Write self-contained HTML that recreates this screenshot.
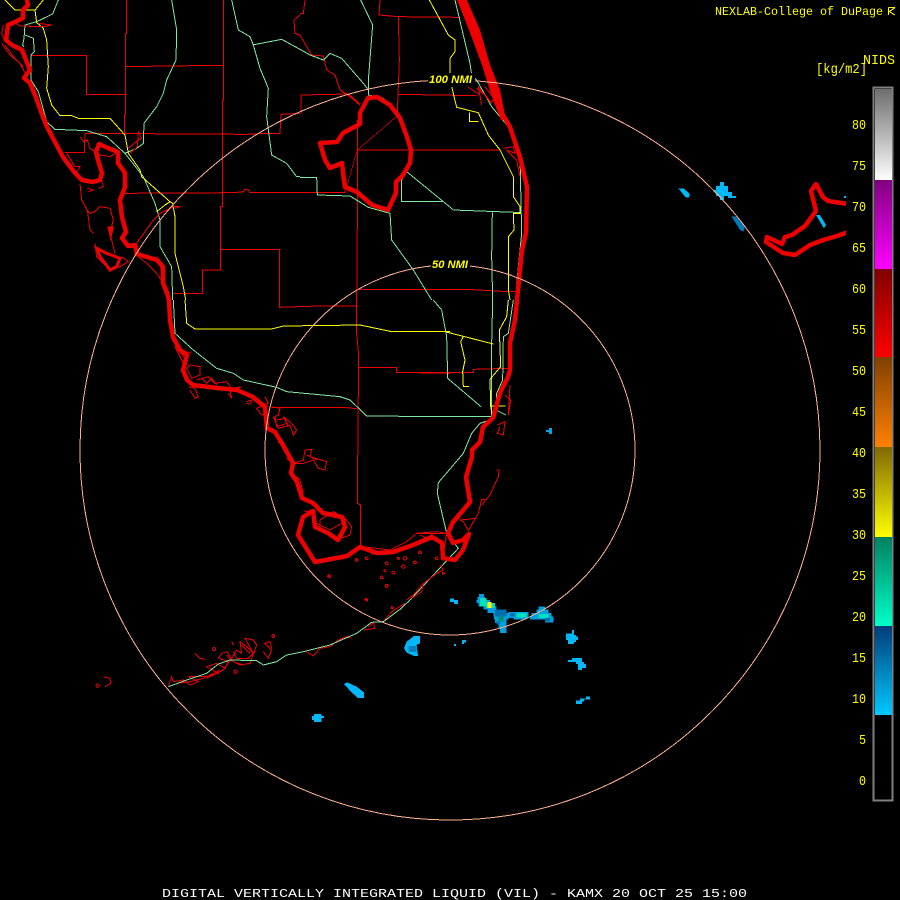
<!DOCTYPE html>
<html><head><meta charset="utf-8"><title>DIGITAL VIL KAMX</title>
<style>
html,body{margin:0;padding:0;background:#000;width:900px;height:900px;overflow:hidden}
svg{display:block}
text{font-family:"Liberation Mono",monospace;fill:#ffff00}
.t{fill:none;stroke:#ee0000;stroke-width:4.5;stroke-linejoin:round;stroke-linecap:round}
.g3{stroke:#80e8a0;stroke-width:3;fill:none}
.y3{stroke:#ffff00;stroke-width:3;fill:none}
.r3{stroke:#ee0000;stroke-width:3;fill:none}
</style></head><body>
<svg width="900" height="900" viewBox="0 0 900 900" xmlns="http://www.w3.org/2000/svg" shape-rendering="crispEdges">
<defs>
<linearGradient id="b1" x1="0" y1="0" x2="0" y2="1"><stop offset="0" stop-color="#6e6e6e"/><stop offset=".96" stop-color="#f8f8f8"/><stop offset="1" stop-color="#fff"/></linearGradient>
<linearGradient id="b2" x1="0" y1="0" x2="0" y2="1"><stop offset="0" stop-color="#800080"/><stop offset="1" stop-color="#ff00ff"/></linearGradient>
<linearGradient id="b3" x1="0" y1="0" x2="0" y2="1"><stop offset="0" stop-color="#800000"/><stop offset="1" stop-color="#ff0000"/></linearGradient>
<linearGradient id="b4" x1="0" y1="0" x2="0" y2="1"><stop offset="0" stop-color="#804000"/><stop offset="1" stop-color="#ff8000"/></linearGradient>
<linearGradient id="b5" x1="0" y1="0" x2="0" y2="1"><stop offset="0" stop-color="#806800"/><stop offset="1" stop-color="#ffff00"/></linearGradient>
<linearGradient id="b6" x1="0" y1="0" x2="0" y2="1"><stop offset="0" stop-color="#008060"/><stop offset="1" stop-color="#00ffc8"/></linearGradient>
<linearGradient id="b7" x1="0" y1="0" x2="0" y2="1"><stop offset="0" stop-color="#003c78"/><stop offset="1" stop-color="#00c8ff"/></linearGradient>
<clipPath id="c"><rect x="0" y="0" width="846" height="900"/></clipPath>
</defs>
<rect width="900" height="900" fill="#000"/>

<!-- zoom1 frame lines -->
<g transform="scale(.33333)">
<path class="r3" d="M380 0V100H377V200L500 198 670 196M670 0V300H667V620H662V810H608V880H520M95 167H260V283H377M377 200V345H373V400M255 400L740 403 800 400H840L843 343 900 340M255 400L253 457H195M375 580L700 578 730 575 735 568 745 570 750 578H900M662 748H838V900M900 45L882 60 885 100 900 105"/>
<path class="g3" d="M175 0L158 42 110 65 75 75 72 115 68 135 72 140M75 105L100 115 103 155 93 165V240L115 275 125 310 140 365 165 388 260 392 320 410 375 460 430 530 465 610 480 660V740L515 800 518 900M515 0L530 90 528 180 500 240 490 280 470 320 432 370 430 430 410 445 375 460M695 0L715 90 750 110 760 135 780 205 805 265 800 350 815 465 860 490 890 530H900M757 135L845 118 900 148"/>
<path class="y3" d="M15 0L45 30H105L130 0M105 30L110 68 130 85 140 120 145 200 140 265 155 315 180 347H215L235 355H330L375 405 385 460 420 510 425 530 510 605 518 610 525 650V760L550 860 557 900M510 605L495 615 470 635"/>
<path class="r3" d="M5 130L30 165 60 190 78 225M15 135L40 170 70 200M10 75L5 100 15 125M115 70L155 75 130 80 60 78 40 65M240 410L250 425 262 420 270 445 300 465 330 470 355 455M200 460L225 500 240 500 228 520 245 540M240 550L245 600 262 630 270 690 280 700M262 565L280 570 265 575M255 620L270 640 285 635 300 620 330 625 340 660 330 700 345 760M285 730L290 770 330 810 360 800 385 785 365 770M415 770L440 790 470 820 490 850 480 790 470 770M410 730L460 660 480 640 520 620 540 620 525 625M385 445L415 420 425 415 415 395 412 440 390 460M300 520L310 560 295 565"/>
<path d="M322 680H342L332 722Z" fill="#ee0000" stroke="none"/>
<path d="M290 745L320 760 360 775 350 800 330 810 300 770Z" fill="none" stroke="#ee0000" stroke-width="9"/>
</g>

<!-- zoom2 frame lines -->
<g transform="translate(300 0) scale(.33333)">
<path class="r3" d="M240 0L237 45 295 50 480 52M295 50L298 180 292 340M292 283L410 285 530 287M3 340V285L145 282 178 310M0 105L20 140 35 165 70 168 80 210 105 225 120 270 150 290 180 315M172 360V660L170 900M170 450H600M15 0L10 40 0 42"/>
<path d="M172 450L295 345M172 450L140 560" fill="none" stroke="#ee0000" stroke-width="2"/>
<path class="r3" d="M0 577H135L138 550M172 868L500 868 625 875H650"/>
<path class="g3" d="M182 0L218 75 205 240V285L250 295 300 350 333 450V490L305 540V605H430M0 148L30 165 70 180 90 160 125 175 190 250 205 270M320 515L430 605 460 630 645 637H665M577 638L575 770 578 900M0 533H50L52 585 150 588 205 622 270 640 275 720 340 810 395 900M465 0L510 190 515 225 530 240 575 320 625 380 660 470 665 700 650 850"/>
<path class="y3" d="M388 0L445 105 465 120V155L450 175V220M455 260L470 322 535 338 565 405 600 450 640 530V590L660 620V640H640L642 690 625 710V870L630 900M508 338V365H535"/>
<path class="r3" d="M505 262L540 285 545 315 535 260 570 305 585 300 555 260M530 265L560 290 575 310M610 445L640 440 645 460 620 450 650 480 660 530"/>
</g>

<!-- zoom3 frame lines -->
<g transform="translate(150 300) scale(.33333)">
<path class="r3" d="M388 0V22L505 18H620M620 0V100L625 155V265L622 610 632 615V740M625 202H740V217L900 220M365 322H580L620 326"/>
<path class="g3" d="M70 0L75 100 130 150 200 205 250 220 280 240 380 262 410 275 570 290 600 300 650 348 900 350"/>
<path class="y3" d="M105 0L110 70 135 87H365L400 78 630 75 725 95H900"/>
<path class="r3" d="M75 140L100 190 110 155 125 160M85 150L105 175M120 195L150 200V225L125 235 110 205ZM115 260L135 265 145 290 135 295 120 270M140 240L175 230 195 250 230 245 245 265 275 260 240 270 245 295 235 280M155 235L170 250 185 235 200 255M345 290L355 310 320 325 335 345 350 340M290 305L305 300 300 312 290 310M365 320L390 325 385 345 375 350 380 380 410 370 400 350 425 370 440 390 430 405 420 375 385 385 370 350M380 360L405 355 415 380M385 425L390 430M410 475L430 490 460 480 465 450 485 448 480 470 530 485 525 510 505 505 490 480 460 490 435 490M470 465L500 480M440 530L450 540 460 580M460 632L490 640 475 630M510 660L550 635 585 655 605 680 600 705 560 720 510 690ZM500 670L540 690 575 670M560 635L540 650M635 740L680 745 720 750 770 725 800 700 860 695 890 700 880 760M650 745L670 765M810 705L830 715 850 700M820 850L790 885 770 900"/>
<g fill="none" stroke="#ee0000" stroke-width="3"><circle cx="620" cy="780" r="4"/><circle cx="650" cy="775" r="4"/><circle cx="695" cy="832" r="4"/><circle cx="710" cy="790" r="4"/><circle cx="705" cy="812" r="3"/><circle cx="730" cy="818" r="4"/><circle cx="710" cy="858" r="4"/><circle cx="537" cy="828" r="4"/><circle cx="648" cy="898" r="3"/><circle cx="745" cy="775" r="3"/><circle cx="765" cy="775" r="5"/><circle cx="760" cy="800" r="5"/><circle cx="795" cy="787" r="4"/><circle cx="810" cy="757" r="4"/><circle cx="860" cy="775" r="4"/><circle cx="880" cy="820" r="3"/></g>
</g>

<!-- zoom4 frame lines -->
<g transform="translate(400 300) scale(.33333)">
<path class="r3" d="M0 217L220 218V208L325 205"/>
<path class="g3" d="M100 0L125 30 140 110 143 235 243 320M278 0L275 130V350M0 349H275M340 0L325 100 310 110 308 240 290 280 288 330 318 345M285 355L240 370 215 400 190 460 115 548 112 580 140 700 175 745 30 900"/>
<path class="y3" d="M0 95H135L280 132M190 110L182 125 195 180 188 215 190 260H207M325 0L320 50 298 90 302 200 270 238 272 320 280 355M275 318H317"/>
<path class="r3" d="M290 510H297L295 530 270 585 258 600 245 598 235 640 205 692 190 665 180 660 230 655M255 600L248 615M292 375L315 365 310 405 292 400 300 380M315 285L332 300 325 345 330 255M50 700H90L135 700M120 795L130 810 110 820 70 850 65 875 35 895"/>
</g>

<!-- zoom5 keys -->
<g transform="translate(90 570) scale(.33333)">
<path class="r3" d="M235 350L245 320 250 335 280 330 300 345 325 335 295 320 345 320 385 310 350 290 380 280 405 295 415 275 385 265 395 250 410 245 425 265 440 240 455 250 450 215 470 230 490 250 465 205 490 210 500 225 480 280 450 285 420 270 400 300 350 325M520 245L535 265 545 240 525 220 540 215 545 235M315 250L330 265 345 268M425 215L430 225M40 320L60 325 62 340 45 350M715 15L720 25M650 245L670 258 690 235 720 230 745 210 770 200 785 205M820 180L855 175 850 158 835 170M880 155L905 125 945 100M260 340L300 335 340 325 390 300M410 255L430 275 460 285M430 245L440 265 475 265 495 245M455 225L480 250"/>
<g fill="none" stroke="#ee0000" stroke-width="3"><circle cx="372" cy="237" r="5"/><circle cx="437" cy="305" r="5"/><circle cx="550" cy="198" r="4"/><circle cx="23" cy="347" r="5"/><circle cx="875" cy="22" r="4"/><circle cx="890" cy="47" r="4"/><circle cx="910" cy="8" r="4"/><circle cx="830" cy="90" r="3"/><circle cx="907" cy="113" r="3"/></g>
<path class="g3" d="M235 350L290 330 350 310 385 282 420 270 500 272 520 285 560 275 590 255 640 245 720 225 800 190 845 157 880 155 930 118 960 90"/>
</g>

<!-- thick coast -->
<g shape-rendering="auto">
<path class="t" d="M27 0L28 5 23 10V18L15 22 8 25 7 33 6 40 12 45 22 50 28 65 30 70 24 78 30 83 35 95 43 117 47 127 55 142 63 157 75 173 82 180 93 182 100 180 102 173 98 160 96 152 99 144 108 148 118 152V163L125 173V187L120 200 122 217 126 232 122 238 128 246 135 245 137 254 147 257 157 260 163 267V283L167 293 169 300 170 320 173 337 180 350 187 355 183 370 187 380 193 385 217 388 237 390 253 397 265 407 267 428 275 432 283 445 293 463 291 473 297 482 302 498 313 503 323 513 342 517 345 527 338 540 328 533 315 527 313 511 303 517 298 535 315 562 347 556 360 547 377 553 393 552 413 545 432 537 442 543 443 558 455 560 463 550 469 534 463 540 453 543 448 533 453 522 470 502 466 477 472 457V450L480 442 483 427 493 418 500 393 508 377 510 370V343L515 320 517 300 522 250 526 233 527 187 520 157 510 127 500 110 499 97"/>
<path d="M457 0H467L480 30 490 65 500 90 506 120H501L493 100 482 65 469 30Z" fill="#ee0000"/>
<path class="t" d="M368 98L377 97 390 105 400 118 407 137 411 150 410 163 403 175 396 182V193L388 210 372 205 357 192 345 187 343 173 342 163 330 168 325 160 320 143 337 142 343 133 360 124V113Z"/>
<path class="t" clip-path="url(#c)" d="M848 204L828 201 823 197 816 184 811 191 816 211 805 226 792 235 785 237 782 244 767 237 766 242 783 253 795 255 810 245 823 240 837 236 848 232"/>
</g>

<!-- radar echoes -->
<g transform="translate(390 580) scale(.33333)">
<g fill="#00b8f8">
<path d="M180 55H192V60H204V72H192V66H180Z"/>
<path d="M72 168H90V190L80 195 84 228H72L50 218 42 205 50 185Z"/>
<rect x="192" y="192" width="6" height="6"/><rect x="216" y="180" width="12" height="8"/><rect x="216" y="188" width="6" height="4"/>
<path d="M534 160H546V150H552V165H558V170H564V180H558V186H552V192H534V180H528V160Z"/>
<path d="M534 240H546V234H576V246H582V252H588V264H576V270H564V252H558V246H534Z"/>
<path d="M558 362H570V356H588V350H600V358H582V364H576V372H558Z"/>
</g>
<rect x="55" y="198" width="25" height="18" fill="#0080c0"/>
</g>
<g transform="translate(470 588) scale(.33333)">
<g fill="#00a0e0">
<rect x="27" y="18" width="15" height="9"/><rect x="22" y="27" width="23" height="9"/><rect x="20" y="36" width="40" height="9"/><rect x="25" y="45" width="45" height="10"/><rect x="40" y="55" width="40" height="10"/><rect x="52" y="65" width="58" height="10"/><rect x="70" y="75" width="45" height="10"/><rect x="72" y="85" width="43" height="10"/><rect x="75" y="95" width="35" height="10"/><rect x="85" y="105" width="25" height="15"/><rect x="90" y="120" width="20" height="15"/><rect x="115" y="72" width="60" height="18"/><rect x="130" y="85" width="40" height="10"/>
<rect x="205" y="55" width="20" height="10"/><rect x="200" y="65" width="35" height="10"/><rect x="185" y="75" width="60" height="10"/><rect x="180" y="85" width="70" height="10"/><rect x="225" y="95" width="25" height="8"/>
</g>
<g fill="#0070b0"><rect x="75" y="65" width="35" height="20"/><rect x="80" y="100" width="10" height="10"/><rect x="225" y="90" width="15" height="10"/><rect x="120" y="75" width="15" height="10"/></g>
<g fill="#00e0c0"><rect x="30" y="30" width="20" height="25"/><rect x="50" y="45" width="25" height="15"/><rect x="140" y="75" width="30" height="13"/><rect x="205" y="78" width="30" height="12"/></g>
<rect x="85" y="85" width="15" height="15" fill="#009070"/>
<rect x="52" y="42" width="13" height="18" fill="#ffff00"/>
</g>
<g transform="translate(90 570) scale(.33333)" fill="#00b8f8">
<path d="M762 342L772 337 800 350 822 367V384H803L780 362Z"/>
<path d="M666 438H672V432H695V438H702V444H695V456H672V450H666Z"/>
</g>
<rect x="546" y="430" width="6" height="2" fill="#00a8e8"/><rect x="549" y="428" width="3" height="6" fill="#00a8e8"/>
<g transform="translate(660 0) scale(.33333)">
<path fill="#00b8f8" d="M162 570H168V558H180V546H192V558H204V576H216V588H228V594H204V588H192V600H180V588H168V576H162Z"/>
<path fill="#00b8f8" d="M55 565H70L90 582 85 594 75 590Z"/>
<path fill="#0078b8" d="M215 650H228L255 680 250 695 240 690Z"/>
<path fill="#00b8f8" d="M468 645H480L498 675 492 685Z"/>
<rect x="552" y="588" width="6" height="6" fill="#00b8f8"/>
</g>

<!-- rings -->
<circle cx="450" cy="450" r="370" fill="none" stroke="#ffb090" stroke-width="1"/>
<circle cx="450" cy="450" r="185" fill="none" stroke="#ffb090" stroke-width="1"/>

<!-- labels -->
<rect x="428" y="73" width="47" height="14" fill="#000"/>
<rect x="431" y="258" width="39" height="14" fill="#000"/>
<g shape-rendering="auto">
<text x="429" y="83" textLength="43" lengthAdjust="spacingAndGlyphs" style="font:italic bold 11px 'Liberation Sans',sans-serif;fill:#ffff00">100 NMI</text>
<text x="432" y="268" textLength="36" lengthAdjust="spacingAndGlyphs" style="font:italic bold 11px 'Liberation Sans',sans-serif;fill:#ffff00">50 NMI</text>
</g>

<!-- color bar -->
<rect x="873.5" y="87.5" width="19" height="713" fill="#000" stroke="#808080" stroke-width="2"/>
<rect x="875" y="89" width="17" height="91" fill="url(#b1)"/>
<rect x="875" y="180" width="17" height="89" fill="url(#b2)"/>
<rect x="875" y="269" width="17" height="88" fill="url(#b3)"/>
<rect x="875" y="357" width="17" height="90" fill="url(#b4)"/>
<rect x="875" y="447" width="17" height="90" fill="url(#b5)"/>
<rect x="875" y="537" width="17" height="89" fill="url(#b6)"/>
<rect x="875" y="626" width="17" height="89" fill="url(#b7)"/>

<!-- text -->
<g shape-rendering="auto" font-size="14">
<g lengthAdjust="spacingAndGlyphs">
<text x="852" y="129" textLength="14" lengthAdjust="spacingAndGlyphs">80</text><text x="852" y="170" textLength="14" lengthAdjust="spacingAndGlyphs">75</text><text x="852" y="211" textLength="14" lengthAdjust="spacingAndGlyphs">70</text><text x="852" y="252" textLength="14" lengthAdjust="spacingAndGlyphs">65</text><text x="852" y="293" textLength="14" lengthAdjust="spacingAndGlyphs">60</text><text x="852" y="334" textLength="14" lengthAdjust="spacingAndGlyphs">55</text><text x="852" y="375" textLength="14" lengthAdjust="spacingAndGlyphs">50</text><text x="852" y="416" textLength="14" lengthAdjust="spacingAndGlyphs">45</text><text x="852" y="457" textLength="14" lengthAdjust="spacingAndGlyphs">40</text><text x="852" y="498" textLength="14" lengthAdjust="spacingAndGlyphs">35</text><text x="852" y="539" textLength="14" lengthAdjust="spacingAndGlyphs">30</text><text x="852" y="580" textLength="14" lengthAdjust="spacingAndGlyphs">25</text><text x="852" y="621" textLength="14" lengthAdjust="spacingAndGlyphs">20</text><text x="852" y="662" textLength="14" lengthAdjust="spacingAndGlyphs">15</text><text x="852" y="703" textLength="14" lengthAdjust="spacingAndGlyphs">10</text><text x="859" y="744" textLength="7" lengthAdjust="spacingAndGlyphs">5</text><text x="859" y="785" textLength="7" lengthAdjust="spacingAndGlyphs">0</text>
</g>
<text x="863" y="64" textLength="32" lengthAdjust="spacingAndGlyphs">NIDS</text>
<text x="816" y="73" textLength="51" lengthAdjust="spacingAndGlyphs">[kg/m2]</text>
<text x="715" y="15" textLength="168" lengthAdjust="spacingAndGlyphs" font-size="12">NEXLAB-College of DuPage</text>
<text x="162" y="897" textLength="585" lengthAdjust="spacingAndGlyphs" font-size="12" style="fill:#fff">DIGITAL VERTICALLY INTEGRATED LIQUID (VIL) - KAMX 20 OCT 25 15:00</text>
</g>
<path d="M888.5 7.5H895M888.5 7.5V15M889 11.5L895 8M889 11.5L895 15" fill="none" stroke="#ffff00" stroke-width="1"/>
</svg>
</body></html>
